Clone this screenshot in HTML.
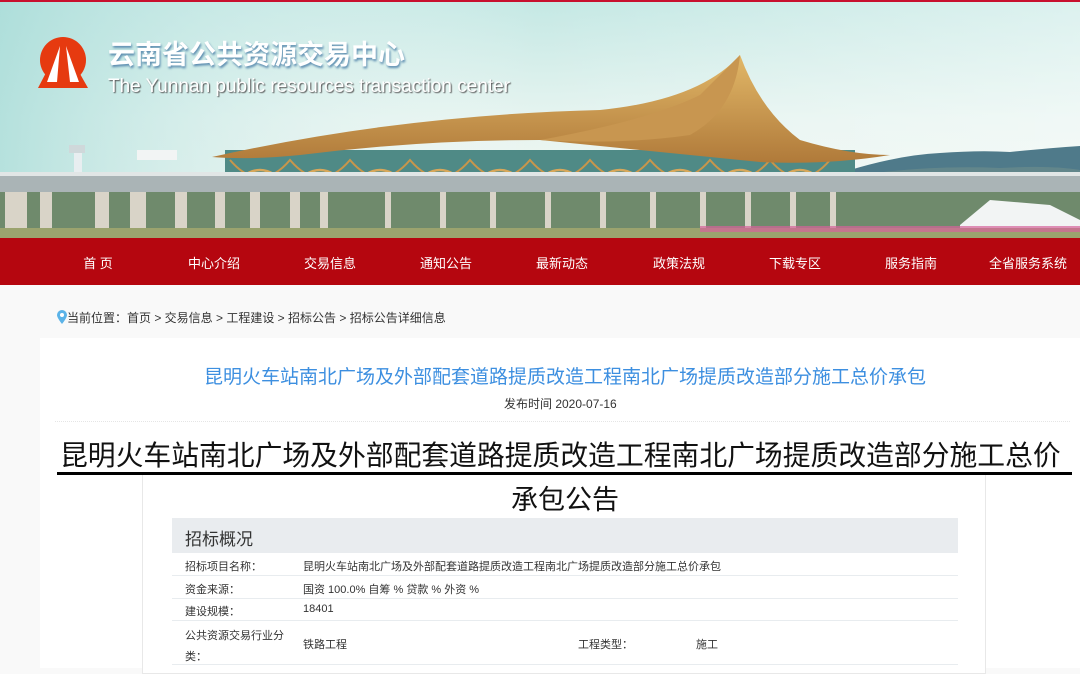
<!DOCTYPE html>
<html><head><meta charset="utf-8"><style>
*{margin:0;padding:0;box-sizing:border-box}
body{width:1080px;height:668px;overflow:hidden;background:#f9f9f9;font-family:"Liberation Sans","Noto Sans CJK SC",sans-serif;position:relative}
.banner{position:absolute;left:0;top:0;width:1080px;height:238px}
.nav{position:absolute;left:0;top:238px;width:1080px;height:47px;background:#b5060f;color:#fff;font-size:13px}
.nav span{position:absolute;top:15px;transform:translateX(-50%);white-space:nowrap}
.crumb{position:absolute;left:57px;top:309px;font-size:12px;color:#333}
.card{position:absolute;left:40px;top:338px;width:1040px;height:330px;background:#fff}
.t1{position:absolute;left:0;width:1130px;top:362px;text-align:center;font-size:19px;color:#3d8fe0}
.date{position:absolute;left:504px;top:395px;font-size:12px;color:#333}
.sep{position:absolute;left:55px;top:421px;width:1015px;border-top:1px dotted #e5e5e5}
.box{position:absolute;left:142px;top:474px;width:844px;height:200px;border:1px solid #e8e8e8;background:#fff}
.big{position:absolute;left:60px;top:434px;font-size:27.8px;color:#111;white-space:nowrap}
.uline{position:absolute;left:57px;top:472px;width:1015px;height:3px;background:#000}
.big2{position:absolute;left:0;width:1130px;top:478px;text-align:center;font-size:27px;color:#111}
.th{position:absolute;left:172px;top:518px;width:786px;height:35px;background:#e9ecef;font-size:17px;color:#333;padding:7px 0 0 13px}
.row{position:absolute;left:172px;width:786px;border-bottom:1px solid #e8ecef;font-size:11px;color:#333}
.row span{position:absolute}
</style></head><body>
<svg class="banner" viewBox="0 0 1080 238" xmlns="http://www.w3.org/2000/svg">
<defs>
<linearGradient id="sky" x1="0" y1="0" x2="0" y2="1"><stop offset="0" stop-color="#c4e8e4"/><stop offset="0.5" stop-color="#e6f4f0"/><stop offset="1" stop-color="#f4f7f2"/></linearGradient>
<linearGradient id="sky2" x1="0" y1="0" x2="1" y2="0"><stop offset="0" stop-color="#a8dcd8" stop-opacity="0.8"/><stop offset="0.5" stop-color="#fff" stop-opacity="0"/><stop offset="1" stop-color="#fff" stop-opacity="0.4"/></linearGradient>
<linearGradient id="roof" x1="0" y1="0" x2="0" y2="1"><stop offset="0" stop-color="#e2b868"/><stop offset="1" stop-color="#b07a3a"/></linearGradient>
</defs>
<rect width="1080" height="238" fill="url(#sky)"/>
<rect width="1080" height="238" fill="url(#sky2)"/>
<rect width="1080" height="2" fill="#c8102e"/>
<path d="M850 170 Q900 155 940 153 Q980 150 1010 152 Q1050 148 1080 146 L1080 200 L850 200Z" fill="#4f7a8a"/>
<path d="M860 175 Q930 165 1000 168 Q1050 165 1080 170 L1080 200 L860 200Z" fill="#6b8c8c" opacity=".7"/>
<rect x="225" y="150" width="630" height="45" fill="#4f8a86"/>
<path d="M230 190 Q260 150 290 190 Q320 150 350 190 Q380 150 410 190 Q440 150 470 190 Q500 150 530 190 Q560 150 590 190 Q620 150 650 190 Q680 150 710 190 Q740 150 770 190 Q800 150 830 190" fill="none" stroke="#d7a75a" stroke-width="2.5"/>
<path d="M230 160 Q260 195 290 160 Q320 195 350 160 Q380 195 410 160 Q440 195 470 160 Q500 195 530 160 Q560 195 590 160 Q620 195 650 160 Q680 195 710 160 Q740 195 770 160 Q800 195 830 160" fill="none" stroke="#c8964b" stroke-width="2"/>
<path d="M212 157 Q400 115 600 110 Q700 100 740 55 Q760 110 800 140 Q850 155 890 155 Q830 165 760 162 Q640 150 540 140 Q420 140 300 155 Q250 160 212 157Z" fill="url(#roof)"/>
<path d="M740 55 Q735 110 690 135 Q620 145 540 140 Q650 120 700 95Z" fill="#c89650"/>
<rect x="74" y="150" width="8" height="30" fill="#e8eef0"/><rect x="69" y="145" width="16" height="8" fill="#cfd8da"/>
<rect x="137" y="150" width="40" height="10" fill="#f2f4f4"/>
<rect x="0" y="172" width="1080" height="20" fill="#aab4b6"/>
<rect x="0" y="172" width="1080" height="4" fill="#e1e6e6"/>
<rect x="0" y="192" width="1080" height="36" fill="#6f8a6c"/>
<g fill="#d9d4c8">
<rect x="5" y="192" width="22" height="38"/><rect x="40" y="192" width="12" height="38"/><rect x="95" y="192" width="14" height="38"/><rect x="130" y="192" width="16" height="38"/><rect x="175" y="192" width="12" height="38"/><rect x="215" y="192" width="10" height="38"/><rect x="250" y="192" width="10" height="38"/><rect x="290" y="192" width="10" height="38"/><rect x="320" y="192" width="8" height="38"/>
<rect x="385" y="192" width="6" height="36"/><rect x="440" y="192" width="6" height="36"/><rect x="490" y="192" width="6" height="36"/><rect x="545" y="192" width="6" height="36"/><rect x="600" y="192" width="6" height="36"/><rect x="650" y="192" width="6" height="36"/><rect x="700" y="192" width="6" height="36"/><rect x="745" y="192" width="6" height="36"/><rect x="790" y="192" width="6" height="36"/><rect x="830" y="192" width="6" height="36"/>
</g>
<path d="M960 225 L990 200 L1050 205 L1080 220 L1080 232 L960 232Z" fill="#f2f4f4"/>
<rect x="0" y="228" width="1080" height="10" fill="#9ba36e"/>
<rect x="700" y="226" width="380" height="6" fill="#d6629a" opacity=".7"/>
<circle cx="63" cy="60" r="23" fill="#e63a10"/>
<path d="M38 88 L62 42 L88 88Z" fill="#e63a10"/>
<path d="M47 82 L60 46 L57 82Z" fill="#fff"/><path d="M66 46 L70 82 L79 82Z" fill="#fff"/>
<text x="108" y="64" font-family="Noto Sans CJK SC,sans-serif" font-size="27" font-weight="bold" fill="#fff" style="filter:drop-shadow(1px 2px 1px #5d8db0)">云南省公共资源交易中心</text>
<text x="108" y="92" font-family="Liberation Sans,sans-serif" font-size="19" fill="#fff" style="filter:drop-shadow(1px 1px 0.5px #555)">The Yunnan public resources transaction center</text>
</svg>
<div class="nav">
<span style="left:98px">首 页</span><span style="left:214px">中心介绍</span><span style="left:330px">交易信息</span><span style="left:446px">通知公告</span><span style="left:562px">最新动态</span><span style="left:679px">政策法规</span><span style="left:795px">下载专区</span><span style="left:911px">服务指南</span><span style="left:1028px">全省服务系统</span>
</div>
<svg style="position:absolute;left:57px;top:310px" width="10" height="14" viewBox="0 0 10 14"><path d="M5 0 A5 5 0 0 1 10 5 C10 8 5 14 5 14 C5 14 0 8 0 5 A5 5 0 0 1 5 0Z" fill="#5bb3e8"/><circle cx="5" cy="5" r="2" fill="#fff"/></svg>
<div class="crumb" style="left:67px">当前位置：首页 &gt; 交易信息 &gt; 工程建设 &gt; 招标公告 &gt; 招标公告详细信息</div>
<div class="card"></div>
<div class="t1">昆明火车站南北广场及外部配套道路提质改造工程南北广场提质改造部分施工总价承包</div>
<div class="date">发布时间 2020-07-16</div>
<div class="sep"></div>
<div class="box"></div>
<div class="big">昆明火车站南北广场及外部配套道路提质改造工程南北广场提质改造部分施工总价</div>
<div class="uline"></div>
<div class="big2">承包公告</div>
<div class="th">招标概况</div>
<div class="row" style="top:553px;height:23px"><span style="left:13px;top:5px">招标项目名称：</span><span style="left:131px;top:5px">昆明火车站南北广场及外部配套道路提质改造工程南北广场提质改造部分施工总价承包</span></div>
<div class="row" style="top:576px;height:23px"><span style="left:13px;top:5px">资金来源：</span><span style="left:131px;top:5px">国资 100.0% 自筹 % 贷款 % 外资 %</span></div>
<div class="row" style="top:599px;height:22px"><span style="left:13px;top:4px">建设规模：</span><span style="left:131px;top:4px">18401</span></div>
<div class="row" style="top:621px;height:44px"><span style="left:13px;top:5px;line-height:21px">公共资源交易行业分<br>类：</span><span style="left:131px;top:15px">铁路工程</span><span style="left:406px;top:15px">工程类型：</span><span style="left:524px;top:15px">施工</span></div>
</body></html>
